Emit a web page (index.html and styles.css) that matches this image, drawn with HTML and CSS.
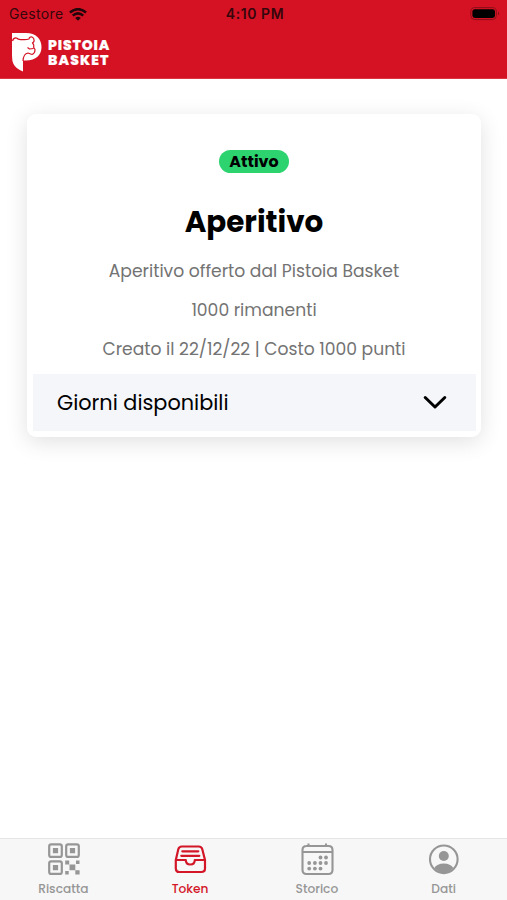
FILE: index.html
```html
<!DOCTYPE html>
<html lang="it">
<head>
<meta charset="utf-8">
<title>Pistoia Basket</title>
<link rel="stylesheet" href="styles.css">
</head>
<body>
<div class="app">
  <header class="header">
    <div class="status">
      <div class="carrier"><span class="carrier-name">Gestore</span>
        <svg class="wifi" width="18" height="13" viewBox="0 0 18 13"><path d="M9 12.800 6.200 9.900Q9 7.600 11.800 9.900Z"/><path d="M3.700 7.600Q9 3.200 14.300 7.600M.9 4.500Q9-2.200 17.100 4.500" fill="none" stroke="#21050a" stroke-width="2.500"/></svg>
      </div>
      <div class="time">4:10 PM</div>
      <svg class="battery" width="31" height="14" viewBox="0 0 31 14"><rect x=".8" y=".6" width="25.600" height="12" rx="4" fill="none" stroke="#8c1019" stroke-width="1"/><rect x="2.400" y="2.200" width="22.600" height="8.800" rx="2.400"/><path d="M28 4.600Q30.600 6.600 28 8.800Z" fill="#8c1019"/></svg>
    </div>
    <div class="brand">
      <svg class="logo" width="31" height="40" viewBox="0 0 31 40"><path fill="#fff" d="M0 0H14C24 0 29.500 6 29.500 14S24 27.500 14 27.500H11V38.500Q4 36 1.500 31Q0 28 0 23Z"/><path fill="none" stroke="#d51224" stroke-width="1.200" stroke-linejoin="round" d="M.5 8Q1.500 4.500 4.500 5Q6.500 7 9.500 6.500Q14 7 17 6Q17.500 3.500 20 4Q22.500 5 22 8.500L20.500 10Q22.500 12 21.500 14L23 16.500Q23 20.500 20 21.500L16 20Q11.500 20.500 11 28M15.500 14.500L17.500 16L21.500 15.500"/></svg>
      <div class="brand-name"><span>PISTOIA</span><span class="brand-second">BASKET</span></div>
    </div>
  </header>
  <main class="content">
    <section class="card">
      <span class="badge">Attivo</span>
      <h1 class="title">Aperitivo</h1>
      <p class="line">Aperitivo offerto dal Pistoia Basket</p>
      <p class="line">1000 rimanenti</p>
      <p class="line line-last">Creato il 22/12/22 | Costo 1000 punti</p>
      <div class="days"><span>Giorni disponibili</span>
        <svg width="24" height="15" viewBox="0 0 24 15"><path d="M2.200 2.500 12 12 21.800 2.500" fill="none" stroke="#000" stroke-width="3" stroke-linecap="round" stroke-linejoin="round"/></svg>
      </div>
    </section>
  </main>
  <nav class="tabs">
    <a class="tab">
      <svg width="34" height="34" viewBox="0 0 34 34" fill="#969696"><g fill="none" stroke="#969696" stroke-width="2.200"><rect x="3.200" y="2.300" width="12.600" height="12.600" rx="2"/><rect x="20.200" y="2.300" width="12.600" height="12.600" rx="2"/><rect x="3.200" y="19.300" width="12.600" height="12.600" rx="2"/></g><path d="M6.900 6h5.200v5.200H6.900zM23.900 6h5.200v5.200h-5.200zM6.900 23h5.200v5.200H6.900zM19.200 18.500h4v4h-4zM30 18.500h3.500v3.500H30zM23.500 22.500h5.800v5.800h-5.800zM19.200 29h3.500v3.500h-3.500zM29.300 28.300h4.300v4.300h-4.300z"/></svg>
      <span>Riscatta</span>
    </a>
    <a class="tab active">
      <svg width="34" height="34" viewBox="0 0 34 34" fill="none" stroke="#d31729" stroke-width="2.200" stroke-linecap="round" stroke-linejoin="round"><path d="M2.800 18 5.300 7.300Q6 4.500 8.800 4.500H25.800Q28.600 4.500 29.300 7.300L32 18V26.500Q32 30 28.300 30H6.300Q2.800 30 2.800 26.500ZM2.800 18H12.800Q12.800 22.500 17.300 22.500T21.800 18H32M9.300 9.300H25.300M8.300 13.800H26.300"/></svg>
      <span>Token</span>
    </a>
    <a class="tab">
      <svg width="34" height="34" viewBox="0 0 34 34" fill="#969696"><path d="M6 4H28.500Q32.500 4 32.500 8V28Q32.500 32 28.500 32H6.500Q2.500 32 2.500 28V8Q2.500 4 6.500 4ZM2.500 10H32.500M8.500 1.500V4M26 1.500V4" fill="none" stroke="#969696" stroke-width="2.100"/><circle cx="20.500" cy="15.500" r="1.900"/><circle cx="26" cy="15.500" r="1.900"/><circle cx="9.200" cy="21" r="1.900"/><circle cx="14.900" cy="21" r="1.900"/><circle cx="20.500" cy="21" r="1.900"/><circle cx="26" cy="21" r="1.900"/><circle cx="9.200" cy="26.600" r="1.900"/><circle cx="14.900" cy="26.600" r="1.900"/><circle cx="20.500" cy="26.600" r="1.900"/></svg>
      <span>Storico</span>
    </a>
    <a class="tab">
      <svg width="34" height="34" viewBox="0 0 34 34" fill="#969696"><circle cx="16.800" cy="17.300" r="13.800" fill="none" stroke="#969696" stroke-width="2.100"/><circle cx="16.800" cy="14" r="5"/><path d="M7.300 26Q10 21.500 16.800 21.500T26.300 26Q22.300 30.800 16.800 30.800T7.300 26Z"/></svg>
      <span>Dati</span>
    </a>
  </nav>
</div>
</body>
</html>
```

FILE: styles.css
```css
* { box-sizing: border-box; }
body { margin: 0; background: #fff; font-family: Poppins, Inter, "Open Sans", sans-serif; color: #000; }
svg { display: block; flex: none; }
.app { height: 900px; display: flex; flex-direction: column; overflow: hidden; }
.header { height: 79px; background: #d51224; border-bottom: 1px solid #dc3542; }
.status { height: 27px; padding: 0 6px 0 9px; display: grid; grid-template-columns: 1fr auto 1fr; align-items: center; color: #35060b; font-family: Inter, sans-serif; }
.carrier { display: flex; align-items: center; gap: 5px; }
.carrier-name { width: 55px; font-size: 14px; line-height: 28px; letter-spacing: .35px; }
.wifi { fill: #21050a; }
.time { font-size: 14px; font-weight: 600; line-height: 28px; letter-spacing: .55px; }
.battery { justify-self: end; }
.brand { display: flex; gap: 5px; padding: 6px 0 0 12px; }
.brand-name { display: flex; flex-direction: column; padding-top: 5px; color: #fff; font-size: 14px; font-weight: 800; line-height: 15px; letter-spacing: .85px; -webkit-text-stroke: .2px #fff; }
.brand-second { letter-spacing: 1.1px; }
.content { flex: 1; padding: 35px 26px 0 27px; }
.card { height: 323px; padding: 36px 5px 6px; border-radius: 9px; background: #fff; box-shadow: 0 5px 22px rgba(0,0,0,.12); display: flex; flex-direction: column; align-items: center; }
.badge { width: 70px; height: 23px; border-radius: 12px; background: #2dd36f; font-size: 15.900px; font-weight: 700; line-height: 23px; text-align: center; }
.title { height: 48px; margin: 25px 0 15px; font-size: 29.400px; font-weight: 700; line-height: 48px; }
.line { margin: 0; height: 39px; line-height: 20px; font-size: 17.150px; color: #737373; white-space: nowrap; }
.line-last { height: 25px; }
.days { width: 443px; height: 57px; margin-top: auto; padding: 0 29px 0 24.500px; background: #f4f6fa; display: flex; align-items: center; justify-content: space-between; font-size: 20.800px; }
.tabs { height: 62px; background: #f7f7f7; border-top: 1px solid #e5e5e5; display: flex; }
.tab { flex: 1; padding-top: 3px; display: flex; flex-direction: column; align-items: center; color: #969696; font-size: 12.200px; font-weight: 500; line-height: 18px; }
.tab span { margin-top: 4px; }
.active { color: #d31729; }
```
